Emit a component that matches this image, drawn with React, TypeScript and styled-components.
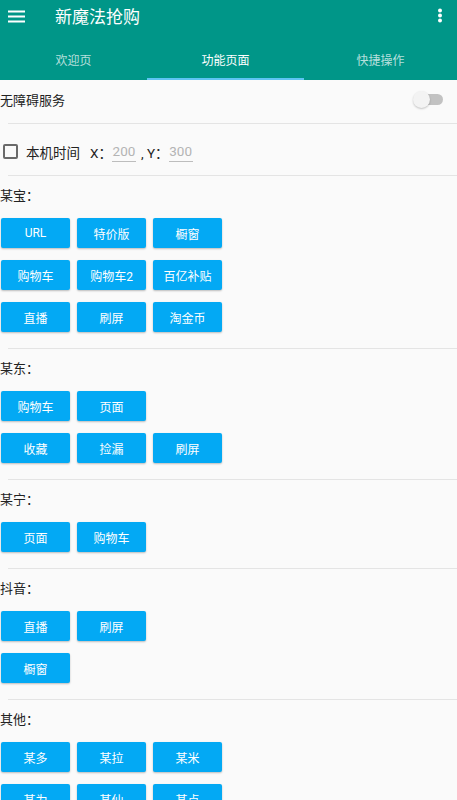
import React from "react";
import styled, { createGlobalStyle } from "styled-components";

const Global = createGlobalStyle`
  html, body { margin: 0; padding: 0; height: 100%; overflow: hidden; background: #fafafa; }
  body { font-family: Roboto, "Noto Sans CJK SC", "Noto Sans", sans-serif; }
  * { box-sizing: border-box; }
`;

const Page = styled.div`
  width: 457px;
  height: 800px;
  overflow: hidden;
  background: #fafafa;
  display: flex;
  flex-direction: column;
`;

const AppBar = styled.header`
  background: #009688;
  display: flex;
  flex-direction: column;
  flex: none;
`;

const Toolbar = styled.div`
  height: 32px;
  display: flex;
  align-items: center;
  padding: 0 8px;
`;

const IconBox = styled.div`
  width: 18px;
  height: 32px;
  display: flex;
  align-items: center;
  justify-content: center;
  flex: none;
`;

const Title = styled.div`
  margin-left: 29px;
  color: #fff;
  font-size: 17px;
  line-height: 32px;
  flex: 1;
  padding-top: 1px;
`;

const Tabs = styled.div`
  height: 48px;
  display: grid;
  grid-template-columns: 147px 157px 1fr;
`;

const Tab = styled.div<{ $active?: boolean }>`
  display: flex;
  align-items: center;
  justify-content: center;
  padding-top: 8px;
  font-size: 12px;
  color: ${(p) => (p.$active ? "#ffffff" : "rgba(255,255,255,0.72)")};
  border-bottom: 2px solid ${(p) => (p.$active ? "#5ec4f2" : "transparent")};
`;

const Content = styled.main`
  display: flex;
  flex-direction: column;
`;

const AccessRow = styled.div`
  height: 38px;
  display: flex;
  align-items: center;
  justify-content: space-between;
  padding-right: 14px;
  margin-bottom: 5px;
  font-size: 13px;
  color: #222;
`;

const Switch = styled.div`
  position: relative;
  width: 30px;
  height: 17px;
`;

const Track = styled.div`
  position: absolute;
  right: 0;
  top: 3px;
  width: 24px;
  height: 11px;
  border-radius: 6px;
  background: #c2c2c2;
`;

const Thumb = styled.div`
  position: absolute;
  left: 0;
  top: 0;
  width: 17px;
  height: 17px;
  border-radius: 50%;
  background: #f3f3f3;
  box-shadow: 0 1px 2px rgba(0, 0, 0, 0.22);
`;

const Divider = styled.div`
  height: 1px;
  margin-left: 8px;
  background: #e4e4e4;
  flex: none;
`;

const TimeRow = styled.div`
  height: 51px;
  display: flex;
  align-items: center;
  padding: 4px 0 0 3px;
  font-size: 13.5px;
  color: #222;
`;

const CheckBox = styled.div`
  width: 15px;
  height: 15px;
  border: 2px solid #6a6a6a;
  border-radius: 2px;
  flex: none;
`;

const CheckLabel = styled.span`
  margin-left: 8px;
`;

const AxisLabel = styled.span<{ $gap: number }>`
  margin-left: ${(p) => p.$gap}px;
`;

const NumInput = styled.span`
  width: 24px;
  color: #b4b4b4;
  font-size: 13.5px;
  line-height: 18px;
  border-bottom: 1px solid #bdbdbd;
  text-align: center;
  padding-bottom: 1px;
`;

const Section = styled.section`
  padding: 10px 0 16px 0;
  display: flex;
  flex-direction: column;
  gap: 12px;
`;

const Label = styled.div`
  font-size: 13px;
  line-height: 20px;
  color: #222;
`;

const ButtonGrid = styled.div`
  display: grid;
  grid-template-columns: repeat(3, 69px);
  column-gap: 7px;
  row-gap: 12px;
  padding-left: 1px;
`;

const Btn = styled.button`
  height: 30px;
  border: none;
  border-radius: 2px;
  background: #03a9f4;
  color: #fff;
  font-family: Roboto, "Noto Sans CJK SC", sans-serif;
  font-size: 12px;
  font-weight: 400;
  padding: 0;
  box-shadow: 0 1px 2px rgba(0, 0, 0, 0.25);
`;

const RowFill = styled.div`
  display: contents;
`;

const Spacer = styled.div``;

const sections: { title: string; rows: string[][] }[] = [
  { title: "某宝：", rows: [["URL", "特价版", "橱窗"], ["购物车", "购物车2", "百亿补贴"], ["直播", "刷屏", "淘金币"]] },
  { title: "某东：", rows: [["购物车", "页面"], ["收藏", "捡漏", "刷屏"]] },
  { title: "某宁：", rows: [["页面", "购物车"]] },
  { title: "抖音：", rows: [["直播", "刷屏"], ["橱窗"]] },
  { title: "其他：", rows: [["某多", "某拉", "某米"], ["某为", "某仙", "某点"]] },
];

export default function App() {
  return (
    <Page>
      <Global />
      <AppBar>
        <Toolbar>
          <IconBox>
            <svg width="18" height="14" viewBox="0 0 18 14">
              <rect x="0" y="1.5" width="17" height="2" fill="#fff" />
              <rect x="0" y="6.5" width="17" height="2" fill="#fff" />
              <rect x="0" y="11.5" width="17" height="2" fill="#fff" />
            </svg>
          </IconBox>
          <Title>新魔法抢购</Title>
          <IconBox>
            <svg width="6" height="16" viewBox="0 0 6 16">
              <circle cx="3" cy="2.5" r="2" fill="#fff" />
              <circle cx="3" cy="7.5" r="2" fill="#fff" />
              <circle cx="3" cy="12.5" r="2" fill="#fff" />
            </svg>
          </IconBox>
        </Toolbar>
        <Tabs>
          <Tab>欢迎页</Tab>
          <Tab $active>功能页面</Tab>
          <Tab>快捷操作</Tab>
        </Tabs>
      </AppBar>
      <Content>
        <AccessRow>
          <span>无障碍服务</span>
          <Switch>
            <Track />
            <Thumb />
          </Switch>
        </AccessRow>
        <Divider />
        <TimeRow>
          <CheckBox />
          <CheckLabel>本机时间</CheckLabel>
          <AxisLabel $gap={10}>X：</AxisLabel>
          <NumInput>200</NumInput>
          <AxisLabel $gap={5}>, Y：</AxisLabel>
          <NumInput>300</NumInput>
        </TimeRow>
        {sections.map((s) => (
          <React.Fragment key={s.title}>
            <Divider />
            <Section>
              <Label>{s.title}</Label>
              <ButtonGrid>
                {s.rows.map((row, ri) => (
                  <RowFill key={ri}>
                    {row.map((b) => (
                      <Btn key={b}>{b}</Btn>
                    ))}
                    {Array.from({ length: 3 - row.length }).map((_, i) => (
                      <Spacer key={"sp" + i} />
                    ))}
                  </RowFill>
                ))}
              </ButtonGrid>
            </Section>
          </React.Fragment>
        ))}
      </Content>
    </Page>
  );
}
